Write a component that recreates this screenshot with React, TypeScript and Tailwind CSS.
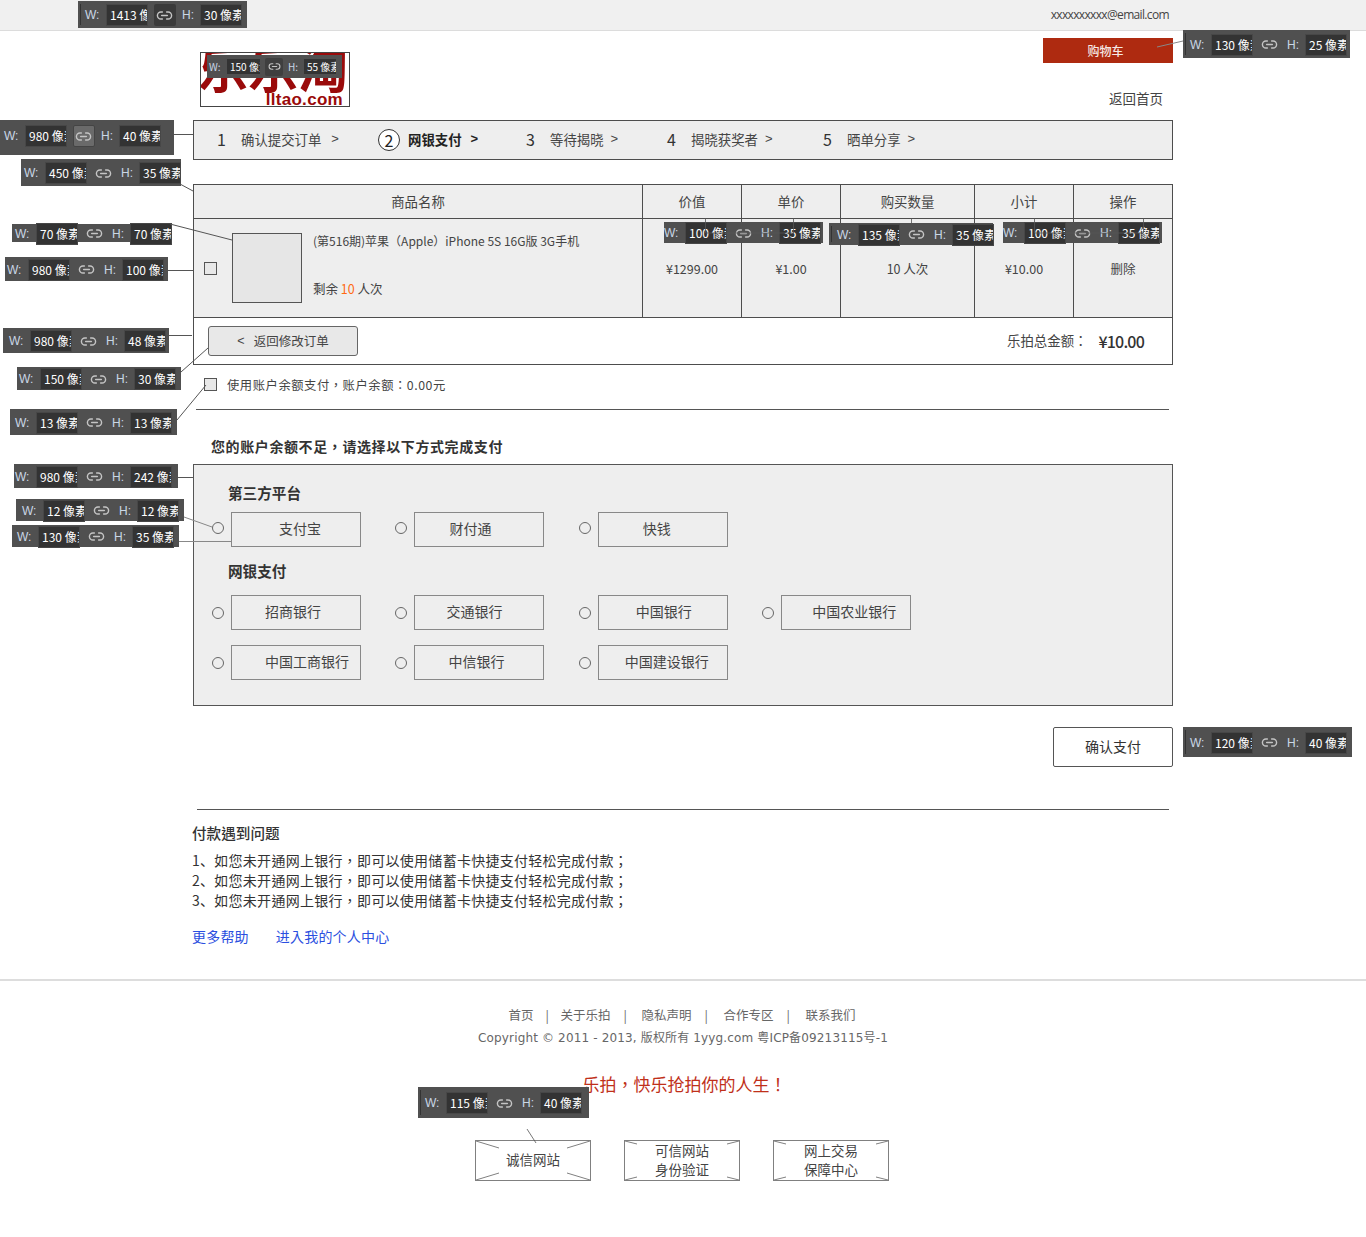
import { Link2 } from "lucide-react";

const FONT = "font-['Noto_Sans_CJK_SC','Noto_Sans',sans-serif]";
const TC = "font-['Noto_Sans_CJK_TC','Noto_Sans',sans-serif]";
const SC = "font-['Noto_Sans_CJK_SC','Noto_Sans',sans-serif]";

function Anno({ cls, w, h, active, activeLight, pad = "pl-[7px]", sep, shift = "pt-[1px]" }: { cls: string; w: string; h: string; active?: boolean; activeLight?: boolean; pad?: string; sep?: boolean; shift?: string }) {
  return (
    <div className={`absolute z-10 flex items-center bg-[#505050] text-[12px] leading-none ${pad} ${shift} ${cls}`}>
      {sep && <div className="absolute left-[2px] top-[3px] bottom-[3px] w-px bg-[#333]" />}
      <span className="w-[22px] shrink-0 font-['Liberation_Sans',sans-serif] text-[#c9d7e6]">W:</span>
      <span className="flex h-[20px] w-[40px] shrink-0 items-center overflow-hidden whitespace-nowrap bg-[#333] pl-[3px] text-white shadow-[0_0_0_1px_#474747]">{w}</span>
      <span className="flex w-[35px] shrink-0 items-center justify-center">
        <span className={`flex h-[22px] w-[22px] items-center justify-center rounded-[2px] ${active ? "bg-[#3a3a3a]" : ""} ${activeLight ? "border border-[#444] bg-[#6a6a6a]" : ""}`}>
          <Link2 size={17} className="text-[#c4c4c4]" strokeWidth={2} />
        </span>
      </span>
      <span className="w-[19px] shrink-0 font-['Liberation_Sans',sans-serif] text-[#c9d7e6]">H:</span>
      <span className="flex h-[20px] w-[40px] shrink-0 items-center overflow-hidden whitespace-nowrap bg-[#333] pl-[3px] text-white shadow-[0_0_0_1px_#474747]">{h}</span>
    </div>
  );
}

function Step({ n, label, current, cls, gap }: { n: string; label: string; current?: boolean; cls: string; gap: string }) {
  return (
    <div className={`flex items-center ${cls}`}>
      {current ? (
        <span className="mr-[8px] flex h-[22px] w-[22px] items-center justify-center rounded-full border border-[#333] bg-white text-[16px] leading-none text-[#222]">{n}</span>
      ) : (
        <span className="mb-[2px] w-[24px] text-[16px] leading-none text-[#333]">{n}</span>
      )}
      <span className={`mb-[2px] text-[13.4px] ${current ? "font-bold text-[#222]" : "text-[#444]"}`}>{label}</span>
      <span className={`mb-[2px] font-['Liberation_Sans',sans-serif] text-[13px] ${gap} ${current ? "font-bold text-[#222]" : "text-[#444]"}`}>&gt;</span>
    </div>
  );
}

function Pay({ label, pad, radio = "" }: { label: string; pad: string; radio?: string }) {
  return (
    <div className="flex w-[149px] items-center">
      <span className={`h-[12px] w-[12px] shrink-0 rounded-full border border-[#666] bg-[#eee] ${radio}`} />
      <span className={`ml-[7px] flex h-[35px] w-[130px] shrink-0 items-center whitespace-nowrap border border-[#888] pb-[2px] text-[14px] text-[#444] ${pad}`}>{label}</span>
    </div>
  );
}

function Badge({ lines, long }: { lines: string[]; long?: boolean }) {
  const dx = long ? 23 : 12;
  const dy = long ? 7 : 3;
  return (
    <div className="relative flex h-[41px] w-[116px] flex-col items-center justify-center border border-[#808080] pb-[2px] text-[13.5px] leading-[19px] text-[#444]">
      <svg className="absolute inset-0 h-full w-full" viewBox="0 0 114 39">
        <path d={`M0 0L${dx} ${dy}M114 0L${114 - dx} ${dy}M0 39L${dx} ${39 - dy}M114 39L${114 - dx} ${39 - dy}`} stroke="#808080" fill="none" />
      </svg>
      {lines.map((l) => (
        <span key={l} className="relative">{l}</span>
      ))}
    </div>
  );
}

export default function App() {
  return (
    <div className={`relative min-h-[1237px] w-[1366px] overflow-hidden bg-white ${FONT}`}>
      <div className="flex h-[31px] items-center justify-end border-b border-[#dcdcdc] bg-[#f0f0f0] pr-[197px] font-['Open_Sans',sans-serif] text-[12px] tracking-[-0.65px] text-[#444]">
        xxxxxxxxxx@email.com
      </div>

      <div className="mx-auto w-[980px]">
        <div className="flex h-[89px] justify-between">
          <div className="relative ml-[7px] mt-[21px] h-[55px] w-[150px] overflow-hidden border border-[#444] bg-white">
            <span className="absolute left-[-3px] top-[-22px] whitespace-nowrap text-[50px] font-bold leading-[70px] text-[#9a0a0a]">乐乐淘</span>
            <span className="absolute right-[6px] bottom-[-4px] font-['Liberation_Sans',sans-serif] text-[17px] font-bold leading-[20px] tracking-[0.3px] text-[#9a0a0a]">lltao.com</span>
          </div>
          <div className="flex flex-col items-end">
            <div className="mt-[7px] flex h-[25px] w-[130px] items-center justify-center bg-[#ae2a10] pr-[5px] text-[12px] font-medium text-[#f5e8e5]">购物车</div>
            <div className="mr-[10px] mt-[24px] text-[13.5px] leading-[22px] text-[#444]">返回首页</div>
          </div>
        </div>

        <div className="flex h-[40px] items-center border border-[#4d4d4d] bg-[#eeeeee] pl-[23px]">
          <Step n="1" label="确认提交订单" cls="w-[161px]" gap="ml-[10px]" />
          <Step n="2" label="网银支付" current cls="w-[148px]" gap="ml-[9px]" />
          <Step n="3" label="等待揭晓" cls="w-[141px]" gap="ml-[7px]" />
          <Step n="4" label="揭晓获奖者" cls="w-[156px]" gap="ml-[7px]" />
          <Step n="5" label="晒单分享" cls="" gap="ml-[7px]" />
        </div>

        <div className="mt-[24px] border border-[#4d4d4d] text-[13.4px] text-[#444]">
          <div className="grid h-[34px] grid-cols-[449px_99px_99px_134px_99px_98px] border-b border-[#4d4d4d] bg-[#eeeeee]">
            {["商品名称", "价值", "单价", "购买数量", "小计", "操作"].map((t, i) => (
              <div key={t} className={`flex items-center justify-center ${i < 5 ? "border-r border-[#4d4d4d]" : ""}`}>{t}</div>
            ))}
          </div>
          <div className="grid h-[99px] grid-cols-[449px_99px_99px_134px_99px_98px] border-b border-[#4d4d4d] bg-[#eeeeee] text-[12.5px]">
            <div className="flex border-r border-[#4d4d4d]">
              <div className="ml-[10px] mt-[43px] h-[13px] w-[13px] border border-[#555] bg-[#e8e8e8]" />
              <div className="ml-[15px] mt-[14px] h-[70px] w-[70px] border border-[#555] bg-[#e6e6e6]" />
              <div className="ml-[11px] flex h-full flex-col text-[#444]">
                <div className={`mt-[13px] text-[12px] leading-[18px] ${TC}`}>(第516期)苹果（Apple）iPhone 5S 16G版 3G手机</div>
                <div className="mt-[30px] leading-[18px]">剩余 <span className="text-[#ff6a13]">10</span> 人次</div>
              </div>
            </div>
            {["¥1299.00", "¥1.00", "10 人次", "¥10.00", "删除"].map((t, i) => (
              <div key={t} className={`flex items-center justify-center pt-[2px] ${i < 4 ? "border-r border-[#4d4d4d]" : ""}`}>{t}</div>
            ))}
          </div>
          <div className="flex h-[46px] items-center justify-between pl-[14px] pr-[28px]">
            <div className="flex h-[30px] w-[150px] items-center justify-center gap-[9px] rounded-[3px] border border-[#666] bg-[#e8e8e8] text-[12.5px]">
              <span className="font-['Liberation_Sans',sans-serif]">&lt;</span>
              <span>返回修改订单</span>
            </div>
            <div className={`flex items-center pb-[1px] text-[13.4px] ${TC}`}>
              <span>乐拍总金额：</span>
              <span className="ml-[11px] text-[16px] font-medium tracking-[-0.8px] text-[#333]">¥10.00</span>
            </div>
          </div>
        </div>

        <div className={`ml-[11px] mt-[13px] flex h-[13px] items-center text-[12.3px] text-[#444] ${TC}`}>
          <span className="h-[13px] w-[13px] border border-[#555] bg-[#e8e8e8]" />
          <span className="ml-[10px] pt-[2px] tracking-[0.55px]">使用账户余额支付，账户余额：0.00元</span>
        </div>
        <div className="ml-[3px] mr-[4px] mt-[18px] h-px bg-[#555]" />
        <div className={`ml-[18px] mt-[26px] h-[20px] text-[14px] font-bold leading-[20px] tracking-[0.6px] text-[#333] ${TC}`}>您的账户余额不足，请选择以下方式完成支付</div>

        <div className="mt-[8px] h-[242px] border border-[#555] bg-[#eeeeee] pl-[18px]">
          <div className="ml-[16px] mt-[18px] h-[20px] text-[14.6px] font-bold leading-[20px] text-[#333]">第三方平台</div>
          <div className="mt-[9px] flex gap-[34.4px]">
            <Pay label="支付宝" pad="pl-[47px]" radio="mb-[3px]" />
            <Pay label="财付通" pad="pl-[34px]" radio="mb-[3px]" />
            <Pay label="快钱" pad="pl-[44px]" radio="mb-[3px]" />
          </div>
          <div className="ml-[16px] mt-[14px] h-[20px] text-[14.6px] font-bold leading-[20px] text-[#333]">网银支付</div>
          <div className="mt-[14px] flex gap-[34.4px]">
            <Pay label="招商银行" pad="pl-[33px]" />
            <Pay label="交通银行" pad="pl-[31px]" />
            <Pay label="中国银行" pad="pl-[37px]" />
            <Pay label="中国农业银行" pad="pl-[30px]" />
          </div>
          <div className="mt-[15px] flex gap-[34.4px]">
            <Pay label="中国工商银行" pad="pl-[33px]" />
            <Pay label="中信银行" pad="pl-[33px]" />
            <Pay label="中国建设银行" pad="pl-[26px]" />
          </div>
        </div>

        <div className="mt-[21px] flex justify-end">
          <div className="flex h-[40px] w-[120px] items-center justify-center rounded-[2px] border border-[#555] pb-[2px] text-[14px] text-[#333]">确认支付</div>
        </div>
        <div className="ml-[4px] mr-[4px] mt-[42px] h-px bg-[#555]" />
        <div className={`ml-[-1px] mt-[13px] text-[14px] leading-[20px] text-[#333] ${TC}`}>
          <div className="text-[14.6px] font-medium">付款遇到问题</div>
          <div className="mt-[7px] tracking-[0.27px]"><span className={SC}>1、</span>如您未开通网上银行，即可以使用储蓄卡快捷支付轻松完成付款；</div>
          <div className="tracking-[0.27px]"><span className={SC}>2、</span>如您未开通网上银行，即可以使用储蓄卡快捷支付轻松完成付款；</div>
          <div className="tracking-[0.27px]"><span className={SC}>3、</span>如您未开通网上银行，即可以使用储蓄卡快捷支付轻松完成付款；</div>
          <div className="mt-[16px] flex gap-[27px] tracking-[0.2px] text-[#2b4fe0]">
            <span>更多帮助</span>
            <span>进入我的个人中心</span>
          </div>
        </div>
      </div>

      <div className="mt-[33px] h-[2px] bg-[#dddddd]" />
      <div className="mt-[25px] flex justify-center pr-[2px] text-[12.5px] leading-[18px] text-[#666]">
        <div className="flex">
          <span>首页</span><span className="ml-[12px] w-[15px]">|</span>
          <span>关于乐拍</span><span className="ml-[13px] w-[18px]">|</span>
          <span>隐私声明</span><span className="ml-[13px] w-[19px]">|</span>
          <span>合作专区</span><span className="ml-[13px] w-[19px]">|</span>
          <span>联系我们</span>
        </div>
      </div>
      <div className="mt-[5px] text-center font-['DejaVu_Sans','Noto_Sans_CJK_SC',sans-serif] text-[12px] leading-[18px] tracking-[0.15px] text-[#666]">
        Copyright © 2011 - 2013, 版权所有 1yyg.com 粤ICP备09213115号-1
      </div>
      <div className={`mt-[24px] pl-[3px] text-center text-[17px] leading-[26px] text-[#c0301a] ${TC}`}>乐拍，快乐抢拍你的人生！</div>
      <div className="mt-[43px] flex justify-center gap-[33px] pr-[2px]">
        <Badge lines={["诚信网站"]} long />
        <Badge lines={["可信网站", "身份验证"]} />
        <Badge lines={["网上交易", "保障中心"]} />
      </div>

      <Anno cls="left-[78px] top-[1px] w-[169px] h-[27px]" w="1413 像素" h="30 像素" active sep />
      <Anno cls="left-[1183px] top-[30px] w-[167px] h-[28px]" w="130 像素" h="25 像素" sep />
      <Anno cls="left-[-3px] top-[120px] w-[177px] h-[35px]" shift="pb-[3px]" w="980 像素" h="40 像素" activeLight />
      <Anno cls="left-[21px] top-[159px] w-[160px] h-[27px]" pad="pl-[3px]" w="450 像素" h="35 像素" />
      <Anno cls="left-[12px] top-[224px] w-[158px] h-[18px]" pad="pl-[3px]" w="70 像素" h="70 像素" />
      <Anno cls="left-[5px] top-[257px] w-[163px] h-[24px]" pad="pl-[2px]" w="980 像素" h="100 像素" />
      <Anno cls="left-[3px] top-[328px] w-[166px] h-[25px]" pad="pl-[6px]" w="980 像素" h="48 像素" />
      <Anno cls="left-[17px] top-[367px] w-[164px] h-[23px]" pad="pl-[2px]" w="150 像素" h="30 像素" />
      <Anno cls="left-[10px] top-[409px] w-[167px] h-[26px]" pad="pl-[5px]" w="13 像素" h="13 像素" />
      <Anno cls="left-[14px] top-[464px] w-[164px] h-[24px]" pad="pl-[1px]" w="980 像素" h="242 像素" />
      <Anno cls="left-[16px] top-[499px] w-[168px] h-[22px]" pad="pl-[6px]" w="12 像素" h="12 像素" />
      <Anno cls="left-[12px] top-[525px] w-[167px] h-[22px]" pad="pl-[5px]" w="130 像素" h="35 像素" />
      <Anno cls="left-[664px] top-[222px] w-[159px] h-[21px]" pad="pl-0" w="100 像素" h="35 像素" />
      <Anno cls="left-[829px] top-[223px] w-[164px] h-[22px]" pad="pl-[8px]" w="135 像素" h="35 像素" sep />
      <Anno cls="left-[1003px] top-[222px] w-[159px] h-[21px]" pad="pl-0" w="100 像素" h="35 像素" />
      <Anno cls="left-[1183px] top-[727px] w-[169px] h-[30px]" w="120 像素" h="40 像素" sep />
      <Anno cls="left-[418px] top-[1087px] w-[171px] h-[31px]" w="115 像素" h="40 像素" sep />

      <div className="absolute left-[207px] top-[55px] z-10 flex h-[23px] w-[135px] items-center bg-[#505050] pl-[2px] text-[10px] leading-none">
        <span className="w-[18px] text-[#c9d7e6]">W:</span>
        <span className="flex h-[15px] w-[33px] items-center overflow-hidden whitespace-nowrap bg-[#333] pl-[3px] text-white">150 像素</span>
        <span className="ml-[5px] flex h-[18px] w-[18px] items-center justify-center rounded-[2px] bg-[#3f3f3f]">
          <Link2 size={13} className="text-[#c4c4c4]" />
        </span>
        <span className="ml-[5px] w-[16px] text-[#c9d7e6]">H:</span>
        <span className="flex h-[15px] w-[32px] items-center overflow-hidden whitespace-nowrap bg-[#333] pl-[3px] text-white">55 像素</span>
      </div>

      <svg className="pointer-events-none absolute left-0 top-0 z-20 h-[1237px] w-[1366px]" viewBox="0 0 1366 1237" fill="none" stroke="#555">
        <path d="M174 134.5H193M180 184L193 191M170 224L232 240M168 270.5H193M169 335.5H192M181 372L208 348M177 420L206 385M178 477.5H193" />
        <path d="M184 517L212 527M179 541.5H231M1157 47L1183 41" stroke="#888" />
        <path d="M705.5 218V233H793.5V218M911.5 218V223M1034.5 218V233H1143.5V218M527 1129L536 1143" strokeOpacity="0.8" />
      </svg>
    </div>
  );
}
